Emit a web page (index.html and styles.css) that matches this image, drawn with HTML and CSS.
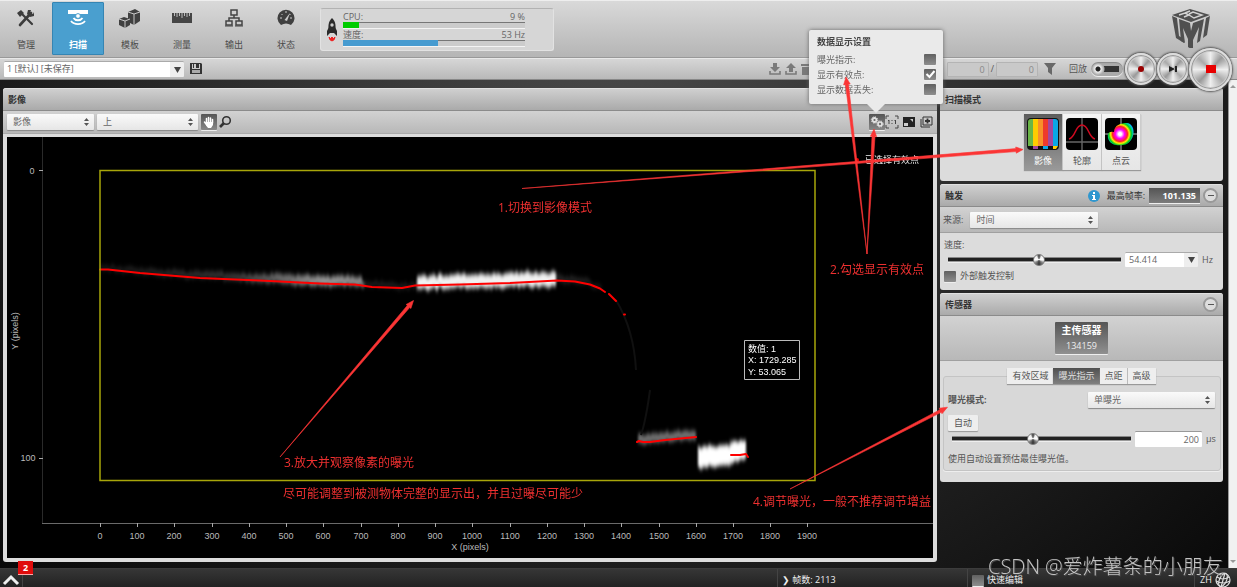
FILE: index.html
```html
<!DOCTYPE html>
<html lang="zh-CN">
<head>
<meta charset="utf-8">
<title>扫描</title>
<link rel="stylesheet" href="styles.css">
</head>
<body>
<header class="topbar">
  <nav class="tabs">
    <button class="tab"><svg width="20" height="20" viewBox="0 0 20 20"><path d="M4 17L15 5" stroke="#3c3c3c" stroke-width="2.600" stroke-linecap="round"/><path d="M5 5l11 11" stroke="#3c3c3c" stroke-width="2.200" fill="none" stroke-linecap="round"/><path d="M1 5l4-3 3 3-4 4zM12 2l3 0-1 3 3 1 1-2v4l-4 1-3-3z" fill="#3c3c3c"/></svg>管理</button>
    <button class="tab tab-on"><svg width="22" height="20" viewBox="0 0 22 20"><path d="M1 2h20v4H1z" fill="#fff"/><circle cx="11" cy="8" r="2.400" fill="#fff" stroke="#4a9ecb"/><path d="M6.500 10a5 4 0 0 0 9 0M4 13a8 6 0 0 0 14 0" fill="none" stroke="#fff" stroke-width="1.800"/></svg>扫描</button>
    <button class="tab"><svg width="22" height="20" viewBox="0 0 22 20"><path d="M9 4l7-3 5 3v9l-6 4-6-3z" fill="#404040"/><path d="M9 4l6 2v11M15 6l6-2" fill="none" stroke="#c8c8c8" stroke-width="1"/><path d="M0 11l5-2 6 2v6l-5 3-6-3z" fill="#404040"/><path d="M0 11l6 2v7M6 13l5-2" fill="none" stroke="#c8c8c8" stroke-width="1"/></svg>模板</button>
    <button class="tab"><svg width="22" height="20" viewBox="0 0 22 20"><path d="M1 5h20v10H1z" fill="#454545"/><path d="M3.500 5v3M6 5v4M8.500 5v3M11 5v5M13.500 5v3M16 5v4M18.500 5v3" stroke="#bbb" stroke-width="1"/></svg>测量</button>
    <button class="tab"><svg width="20" height="20" viewBox="0 0 20 20"><path d="M7 2h6v5H7zM2 13h6v4H2zM12 13h6v4h-6zM10 7v3M5 13v-3h10v3" fill="none" stroke="#454545" stroke-width="1.500"/><path d="M1 18h8M11 18h8" stroke="#454545" stroke-width="1"/></svg>输出</button>
    <button class="tab"><svg width="20" height="20" viewBox="0 0 20 20"><path d="M5 17a8.500 8.500 0 1 1 10 0q-5-3-10 0z" fill="#404040"/><path d="M4 10h2M5.500 6l1 1M10 3v2M14.500 6l-1 1M16 10h-2" stroke="#ccc"/><path d="M8.500 12L14 5l-3 8z" fill="#ccc"/></svg>状态</button>
  </nav>
  <section class="stats">
    <svg width="12" height="26" viewBox="0 0 12 26"><path d="M6 1c4 4 4 8 3 13H3C2 9 2 5 6 1z" fill="#2b2b2b"/><path d="M3 10l-2 4v5l3-3h4l3 3v-5l-2-4z" fill="#2b2b2b"/><circle cx="6" cy="8" r="1.700" fill="#ccc"/><path d="M3 20l1.500 1.500L6 20l1.500 1.500L9 20q0 3-3 4-3-1-3-4z" fill="#e22" stroke="#e22"/></svg>
    <div class="meters">
      <div class="meter-label"><span>CPU:</span><span>9 %</span></div>
      <div class="meter"><div class="meter-fill green" style="width:9%"></div></div>
      <div class="meter-label second"><span>速度:</span><span>53 Hz</span></div>
      <div class="meter"><div class="meter-fill blue" style="width:52%"></div></div>
    </div>
  </section>
  <svg class="logo" width="40" height="40" viewBox="0 0 40 40"><g fill="#505050"><path d="M1 7l18-6 20 6-19 7z"/><path d="M1 8l5 2 2 18 5 3v4L5 30z"/><path d="M39 8l-4 2-3 20 4-3z"/><path d="M8 11l11 4 1 8 2-8 11-4-4 22-3 2 2-16-6 13v8l-2 1-3-2v-8l-5-11 2 15-4-2z"/></g><path d="M8 7l6-2 4 2-5 2M18 7l5 3 8-3-9-3-4 2M14 5l5-2" fill="none" stroke="#d4d4d4" stroke-width="1.400"/></svg>
</header>

<div class="jobbar">
  <select class="job" aria-label="作业"><option>1 [默认] [未保存]</option></select>
  <button class="plain" aria-label="保存"><svg width="12" height="12" viewBox="0 0 12 12"><path d="M0 0h11l1 1v10H0z" fill="#333"/><path d="M2 1h8v5H2z" fill="#c9c9c9"/><path d="M3 1h1v4H3zM6 1h3v4H6z" fill="#333"/><path d="M2 7h8v3H2z" fill="#aaa"/></svg></button>
  <div class="spacer"></div>
  <div class="play">
    <button class="plain" aria-label="下载"><svg width="12" height="12" viewBox="0 0 12 12"><path d="M4 0h4v4h3L6 9 1 4h3z" fill="#7a7a7a"/><path d="M1 8v3h10V8" fill="none" stroke="#7a7a7a" stroke-width="1.600"/></svg></button>
    <button class="plain" aria-label="上传"><svg width="12" height="12" viewBox="0 0 12 12"><path d="M6 0l5 5H8v4H4V5H1z" fill="#7a7a7a"/><path d="M1 8v3h10V8" fill="none" stroke="#7a7a7a" stroke-width="1.600"/></svg></button>
    <button class="plain" aria-label="删除"><svg width="10" height="12" viewBox="0 0 10 12"><path d="M0 1h10v2H0zM1 4h8v8H1z" fill="#7a7a7a"/></svg></button>
    <div class="spacer"></div>
    <input class="frame" value="0" aria-label="当前帧"><span class="slash">/</span><input class="frame" value="0" aria-label="总帧数">
  </div>
  <button class="plain" aria-label="筛选"><svg width="12" height="12" viewBox="0 0 12 12"><path d="M0 0h12L8 5v7L4 9V5z" fill="#686868"/></svg></button>
  <label class="replay" for="replay">回放</label>
  <input type="checkbox" class="toggle" id="replay">
  <div class="transport">
    <button class="knob" aria-label="录制"><svg width="8" height="8" viewBox="0 0 8 8"><circle cx="4" cy="4" r="3" fill="#900"/></svg></button>
    <button class="knob" aria-label="单步"><svg width="10" height="8" viewBox="0 0 10 8"><path d="M1 1l6 3-6 3zM7 1h2v6H7z" fill="#222"/></svg></button>
    <button class="knob big" aria-label="停止"><svg width="10" height="8" viewBox="0 0 10 8"><path d="M0 0h10v8H0z" fill="#e80000"/></svg></button>
  </div>
</div>

<main class="work">
  <section class="viewer card">
    <h2 class="head">影像</h2>
    <div class="tools">
      <select class="w-view" aria-label="数据视图"><option>影像</option></select>
      <select class="w-top" aria-label="传感器位置"><option>上</option></select>
      <button class="tool tool-on" aria-label="平移"><svg width="12" height="12" viewBox="0 0 12 12"><path d="M3.500 7V2.500M5.500 6V1.500M7.500 6V2M9.500 7V3.500M1.500 6l3 4" stroke="#fff" stroke-width="1.500" stroke-linecap="round"/><path d="M3 6h7v3l-2 3H5L3 9z" fill="#fff"/></svg></button>
      <button class="tool lens" aria-label="缩放"><svg width="14" height="14" viewBox="0 0 14 14"><circle cx="8.500" cy="5.500" r="3.800" fill="none" stroke="#333" stroke-width="1.600"/><path d="M6 8L2 12" stroke="#333" stroke-width="2.600"/></svg></button>
      <div class="spacer"></div>
      <div class="gear">
        <button class="tool tool-on" aria-label="数据显示设置"><svg width="14" height="12" viewBox="0 0 14 12"><g fill="none" stroke="#e4e4e4"><circle cx="4.500" cy="4" r="2" stroke-width="1.800"/><circle cx="4.500" cy="4" r="3.200" stroke-dasharray="1.300 1.200"/><circle cx="10" cy="8" r="2" stroke-width="1.600"/><circle cx="10" cy="8" r="3.100" stroke-dasharray="1.300 1.200"/></g></svg></button>
        <div class="popup">
          <h3>数据显示设置</h3>
          <label>曝光指示:<input type="checkbox"></label>
          <label>显示有效点:<input type="checkbox" checked></label>
          <label>显示数据丢失:<input type="checkbox"></label>
        </div>
      </div>
      <button class="tool" aria-label="实际大小"><svg width="14" height="14" viewBox="0 0 14 14"><path d="M1 4V1h3M10 1h3v3M13 10v3h-3M4 13H1v-3" fill="none" stroke="#444"/><path d="M3 6l1-1v4M9.500 6l1-1v4M7 5v1M7 8v1" fill="none" stroke="#444"/></svg></button>
      <button class="tool" aria-label="适合窗口"><svg width="12" height="10" viewBox="0 0 12 10"><path d="M0 0h12v10H0z" fill="#222"/><path d="M1 6h4v3H1zM7 2h3v3" fill="#ccc"/></svg></button>
      <button class="tool" aria-label="新窗口"><svg width="13" height="12" viewBox="0 0 13 12"><path d="M3 1h9v8H3zM1 3v8h9" fill="none" stroke="#333"/><path d="M7.500 2.500v5M5 5h5" stroke="#333" stroke-width="1.800"/></svg></button>
    </div>
    <div class="plot-wrap">
      <svg class="plot" viewBox="7 137 926 421" preserveAspectRatio="xMinYMin meet">
        <defs>
          <filter id="streak" x="-5%" y="-80%" width="110%" height="260%" color-interpolation-filters="sRGB">
            <feTurbulence type="fractalNoise" baseFrequency="0.35 0.002" numOctaves="2" seed="4" result="n"/>
            <feDisplacementMap in="SourceGraphic" in2="n" xChannelSelector="A" yChannelSelector="R" scale="7" result="d"/>
            <feGaussianBlur in="d" stdDeviation="0.900 2.400"/>
          </filter>
          <linearGradient id="ga"><stop offset="0" stop-color="#fff" stop-opacity=".12"/><stop offset=".5" stop-color="#fff" stop-opacity=".22"/><stop offset=".85" stop-color="#fff" stop-opacity=".6"/><stop offset="1" stop-color="#fff" stop-opacity=".55"/></linearGradient>
        </defs>
        <path d="M42.500 137V523" fill="none" stroke="#2a2a2a"/>
        <path d="M42 523.500H933" fill="none" stroke="#6a6a6a"/>
        <path d="M39 170.500h4M39 458.500h4M100.500 523v4M137.500 523v4M174.500 523v4M212.500 523v4M249.500 523v4M286.500 523v4M323.500 523v4M361.500 523v4M398.500 523v4M435.500 523v4M472.500 523v4M510.500 523v4M547.500 523v4M584.500 523v4M621.500 523v4M659.500 523v4M696.500 523v4M733.500 523v4M770.500 523v4M807.500 523v4" stroke="#aaa"/>
        <g class="axis" text-anchor="middle">
          <text x="32" y="174">0</text><text x="28" y="461">100</text>
          <text x="100" y="539">0</text><text x="137" y="539">100</text><text x="174" y="539">200</text><text x="212" y="539">300</text><text x="249" y="539">400</text><text x="286" y="539">500</text><text x="323" y="539">600</text><text x="361" y="539">700</text><text x="398" y="539">800</text><text x="435" y="539">900</text><text x="472" y="539">1000</text><text x="510" y="539">1100</text><text x="547" y="539">1200</text><text x="584" y="539">1300</text><text x="621" y="539">1400</text><text x="659" y="539">1500</text><text x="696" y="539">1600</text><text x="733" y="539">1700</text><text x="770" y="539">1800</text><text x="807" y="539">1900</text>
          <text x="470" y="550">X (pixels)</text>
          <text x="18" y="331" transform="rotate(-90 18 331)">Y (pixels)</text>
        </g>
        <g filter="url(#streak)">
          <path d="M100 266L240 274 300 275 362 277 364 286 300 285 240 281 100 270z" fill="url(#ga)"/>
          <path d="M362 281L410 285l5-2v5l-10 1-43-4z" fill="#fff" opacity=".15"/>
          <path d="M417 276L557 272v14l-140 3z" fill="#fff" opacity=".95"/>
          <path d="M557 275l30 4 16 7v2l-16-4-30-2z" fill="#fff" opacity=".15"/>
          <path d="M638 435l58-5v9l-58 5z" fill="#fff" opacity=".45"/>
        </g>
        <g filter="url(#streak)"><path d="M698 447l33-2v20l-33 3z" fill="#fff"/><path d="M731 441h15v18l-15 4z" fill="#fff"/></g>
        <path d="M616 300Q634 330 636 370M650 390Q646 420 641 435" fill="none" stroke="#101010" stroke-width="2"/>
        <path d="M100 269.500L108 269.500 140 273 200 278 260 280.500 320 283.500 355 284.500 372 287 402 288 415 285.500 460 284.500 510 283 557 280.500 575 281.500 590 284.500 600 288.500 605 292M609 294L616 301M624 314.500h1M637 442l2-1 4 1 7 0 15-2 31-3M731 455l9 0 6-1 2 3" fill="none" stroke="#f00" stroke-width="2" stroke-linecap="round" stroke-linejoin="round"/>
        <path d="M100 170.500H815V480.500H100z" fill="none" stroke="#a8a60a" stroke-width="1.500"/>
        <circle cx="857" cy="160" r="2" fill="#e00"/>
        <text class="sel" x="865" y="163">已选择有效点</text>
        <path d="M744.500 340.500h55v39h-55z" fill="#000" stroke="#bbb"/>
        <g class="tip"><text x="748" y="352">数值: 1</text><text x="748" y="363">X: 1729.285</text><text x="748" y="375">Y: 53.065</text></g>
      </svg>
    </div>
  </section>

  <aside class="side">
    <section class="card">
      <h2 class="head">扫描模式</h2>
      <div class="modes">
        <button class="mode mode-on"><svg width="32" height="32" viewBox="0 0 32 32"><rect width="32" height="32" rx="4" fill="#111"/><path d="M1 4q0-3 3-3h2v27H1z" fill="#6ab547"/><path d="M6 1h5v27H6z" fill="#fc0"/><path d="M11 1h5v27h-5z" fill="#f7902a"/><path d="M16 1h5v27h-5z" fill="#ee3a2b"/><path d="M21 1h5v27h-5z" fill="#a2479c"/><path d="M26 1h2q3 0 3 3v24h-5z" fill="#0aa7e6"/><path d="M6 28h5v3H6z" fill="#a2479c"/><path d="M16 28h5v3h-5z" fill="#0aa7e6"/><path d="M26 28h5l-2 3h-3z" fill="#fc0"/></svg>影像</button>
        <button class="mode"><svg width="32" height="32" viewBox="0 0 32 32"><rect width="32" height="32" rx="4"/><path d="M16 0v32M0 24h32" stroke="#666" stroke-width="1.400"/><path d="M3 21C10 19 9 7 16 7S22 19 29 21" fill="none" stroke="#d00a20" stroke-width="1.400"/></svg>轮廓</button>
        <button class="mode"><svg width="32" height="32" viewBox="0 0 32 32"><defs><radialGradient id="rb" gradientUnits="userSpaceOnUse" cx="15" cy="16" r="15"><stop offset=".1" stop-color="#fff"/><stop offset=".3" stop-color="#f0f"/><stop offset=".5" stop-color="#f22"/><stop offset=".62" stop-color="#fe0"/><stop offset=".75" stop-color="#0c2"/><stop offset=".9" stop-color="#0cd"/><stop offset="1" stop-color="#22f"/></radialGradient></defs><rect width="32" height="32" rx="4"/><path d="M16 0v32M0 16h32" stroke="#bbb"/><path d="M3 16q1-3 6-2c0-7 7-9 13-9 8 1 8 12 4 17-3 5-10 6-15 5-6-1-9-6-8-11z" fill="url(#rb)"/></svg>点云</button>
      </div>
    </section>

    <section class="card">
      <h2 class="head">触发<span class="spacer"></span>
        <svg class="info" width="12" height="12" viewBox="0 0 12 12"><circle cx="6" cy="6" r="6" fill="#2f97cf"/><path d="M5 2h2v2H5zM4 5h3v4h1v1H4V9h1V6H4z" fill="#fff"/></svg>
        <span class="rate-label">最高帧率:</span><output class="rate">101.135</output>
        <button class="fold" aria-label="折叠"></button></h2>
      <div class="source"><label for="src">来源:</label><select id="src" class="w-src"><option>时间</option></select></div>
      <div class="trigger">
        <label for="speed">速度:</label>
        <div class="row"><input id="speed" type="range" min="0" max="100" value="53" class="range"><select class="hz" aria-label="速度值"><option>54.414</option></select><span class="unit">Hz</span></div>
        <label class="check"><input type="checkbox">外部触发控制</label>
      </div>
    </section>

    <section class="card">
      <h2 class="head">传感器<span class="spacer"></span><button class="fold" aria-label="折叠"></button></h2>
      <div class="sensor"><button class="main-sensor"><b>主传感器</b>134159</button></div>
      <div class="exposure">
        <div class="group">
          <div class="subtabs"><button>有效区域</button><button class="sub-on">曝光指示</button><button>点距</button><button class="ruled">高级</button></div>
          <div class="row between"><label for="mode"><b>曝光模式:</b></label><select id="mode" class="w-mode"><option>单曝光</option></select></div>
          <button class="auto">自动</button>
          <div class="row"><input type="range" min="0" max="100" value="45" class="range" aria-label="曝光"><input class="us" value="200" aria-label="曝光值"><span class="unit">μs</span></div>
          <p class="hint">使用自动设置预估最佳曝光值。</p>
        </div>
      </div>
    </section>
  </aside>
  <div class="scroll"><i class="up"></i><i class="down"></i></div>
</main>

<footer class="status">
  <button class="expand" aria-label="展开日志"><svg width="18" height="12" viewBox="0 0 18 12"><path d="M2 10l7-7 7 7" fill="none" stroke="#eee" stroke-width="3"/></svg><span class="badge">2</span></button>
  <div class="spacer"></div>
  <div class="cell frames">❯ 帧数: 2113</div>
  <label class="cell edit"><input type="checkbox">快速编辑</label>
  <div class="cell lang">ZH <svg width="16" height="16" viewBox="0 0 16 16"><g fill="none" stroke="#ddd" stroke-width="1.200"><circle cx="8" cy="8" r="7"/><ellipse cx="8" cy="8" rx="3.500" ry="7" transform="rotate(25 8 8)"/><path d="M2 5q6 4 12 0M1 9q7 4 14 0M10 1L6 15"/></g></svg></div>
</footer>

<svg class="notes" viewBox="0 0 1237 587" preserveAspectRatio="xMinYMin meet">
  <g fill="#fb3535" stroke="#fb3535" stroke-width="0.600">
    <path d="M522 188.500L1016.100 151.600 1016.300 153.200 1023 149.500 1015.700 147 1015.900 148.600z"/>
    <path d="M867 254L848.500 84.300 850.200 84 846 77 843.600 84.900 845.500 84.700z"/>
    <path d="M867 254L875 136.600 876.600 136.700 874 129 870.400 136.300 872 136.400z"/>
    <path d="M280 457L409.700 307.500 410.900 308.500 413.500 300.500 406.100 304.500 407.300 305.500z"/>
    <path d="M790 489L941.200 412.300 942 413.700 947.500 407.200 939.200 408.200 940 409.700z"/>
  </g>
  <g class="note">
    <text x="498" y="212">1.切换到影像模式</text>
    <text x="830" y="274">2.勾选显示有效点</text>
    <text x="284" y="467">3.放大并观察像素的曝光</text>
    <text x="283" y="498">尽可能调整到被测物体完整的显示出，并且过曝尽可能少</text>
    <text x="753" y="506">4.调节曝光，一般不推荐调节增益</text>
  </g>
  <text class="mark" x="988" y="574">CSDN @爱炸薯条的小朋友</text>
</svg>
</body>
</html>
```
FILE: styles.css
```css
* { box-sizing: border-box; }
body, button, input, select {
  font: 9px/12px "Open Sans", "Noto Sans", "Noto Sans CJK SC", sans-serif;
  color: #555;
}
body {
  margin: 0;
  position: relative;
  min-height: 100vh;
  display: flex;
  flex-direction: column;
  background: radial-gradient(ellipse at 50% 0, #4c4c4c, #2a2a2a 50%, #080808);
  overflow: hidden;
}
button, select, input { margin: 0; padding: 0; border: 0; border-radius: 1px; }
button { background: none; }
svg { display: block; flex: none; }
h2, h3, p { margin: 0; font-size: 9px; }
.spacer { flex: 1; }

.topbar {
  display: flex;
  height: 58px;
  background: linear-gradient(#d9d9d9, #b5b5b5);
  border-top: 1px solid #eee;
  border-bottom: 1px solid #999;
}
.tabs { display: flex; padding: 1px 0 2px; }
.tab {
  width: 52px;
  display: flex;
  flex-direction: column;
  align-items: center;
  gap: 11px;
  padding-top: 6px;
  color: #4a4a4a;
}
.tab-on {
  background: #4a9fcf;
  border: 1px solid #3585b3;
  padding-top: 5px;
  color: #fff;
  font-weight: bold;
}
.stats {
  display: flex;
  align-items: center;
  gap: 5px;
  width: 234px;
  margin: 7px 0 6px 8px;
  padding: 0 28px 0 5px;
  border: 1px solid #e2e2e2;
  border-top-color: #b2b2b2;
  border-radius: 3px;
  background: #d6d6d6;
}
.meters { flex: 1; line-height: 10px; color: #666; }
.meter-label { display: flex; justify-content: space-between; }
.second { margin-top: 1px; }
.meter { height: 7px; background: #ccc; border-top: 1px solid #777; border-bottom: 1px solid #f4f4f4; }
.meter-fill { height: 6px; margin-top: -1px; }
.green { background: #0c0; }
.blue { background: #469bd0; }
.logo { margin: 7px 26px 0 auto; }

.jobbar {
  display: flex;
  align-items: center;
  height: 22px;
  padding: 0 5px 0 4px;
  background: linear-gradient(#d6d6d6, #b9b9b9);
  border-bottom: 1px solid #888;
  border-top: 1px solid #e8e8e8;
}
select {
  appearance: none;
  height: 16px;
  padding: 0 14px 0 6px;
  color: #666;
  background: url("data:image/svg+xml,%3Csvg xmlns='http://www.w3.org/2000/svg' width='5' height='8'%3E%3Cpath d='M0 3l2.500-3L5 3zM0 5l2.500 3L5 5z' fill='%23555'/%3E%3C/svg%3E") no-repeat right 5px center, linear-gradient(#fafafa, #e6e6e6);
  box-shadow: 0 1px 1px #888;
}
.job, .hz {
  background: url("data:image/svg+xml,%3Csvg xmlns='http://www.w3.org/2000/svg' width='7' height='6'%3E%3Cpath d='M0 0h7l-3.500 6z' fill='%23444'/%3E%3C/svg%3E") no-repeat right 3px bottom 4px, linear-gradient(90deg, #fff calc(100% - 14px), #eee 0);
  box-shadow: inset 0 1px 0 #aaa;
}
.job { width: 180px; padding-left: 3px; margin-right: 6px; }
.play { display: flex; align-items: center; gap: 4px; width: 269px; margin-right: 6px; }
.frame {
  width: 42px;
  height: 15px;
  padding-right: 3px;
  text-align: right;
  color: #888;
  background: #c9c9c9;
  border: 1px solid #b4b4b4;
}
.slash { margin: 0 -2px; }
.replay { margin: 0 4px 0 13px; }
.toggle {
  appearance: none;
  width: 32px;
  height: 14px;
  border-radius: 7px;
  background: radial-gradient(circle at 7px 7px, #222 2px, #eee 3px, #aaa 6px, transparent 7px), linear-gradient(transparent 4px, #333 0 10px, transparent 0) 10px 0 / 18px 14px no-repeat, #aaa;
  box-shadow: inset 0 1px 1px #888, 0 1px 0 #eee;
}
.transport { display: flex; align-items: center; margin-left: 2px; z-index: 3; }
.knob {
  display: grid;
  place-items: center;
  width: 32px;
  height: 32px;
  border-radius: 50%;
  background: conic-gradient(#eee, #999 12%, #eee 25%, #aaa 37%, #eee 50%, #999 62%, #eee 75%, #aaa 87%, #eee);
  border: 2px solid #ddd;
  box-shadow: inset 0 0 0 1px #999, inset 0 0 0 2px #ccc, 0 0 2px 1px #555;
}
.big { width: 43px; height: 43px; }

.work { flex: 1; display: flex; min-height: 0; }
.card { background: #dcdcdc; border-radius: 3px; overflow: hidden; }
.head {
  display: flex;
  align-items: center;
  height: 23px;
  padding: 0 5px;
  color: #333;
  background: linear-gradient(#cfcfcf, #aaa);
  border-bottom: 1px solid #8b8b8b;
  border-top: 1px solid #e0e0e0;
}
.viewer {
  flex: 1;
  min-width: 0;
  display: flex;
  flex-direction: column;
  margin: 8px 3px 6px 3px;
  overflow: visible;
}
.viewer .head { border-radius: 3px 3px 0 0; }
.tools {
  display: flex;
  align-items: center;
  gap: 3px;
  height: 23px;
  padding: 0 5px 0 4px;
  background: linear-gradient(#d2d2d2, #b8b8b8);
  border-bottom: 1px solid #aaa;
}
.w-view { width: 87px; }
.w-top { width: 101px; }
.tool { width: 16px; height: 16px; display: grid; place-items: center; margin-right: -2px; }
.tool-on { background: linear-gradient(#555, #888); box-shadow: 0 1px 0 #eee; margin-right: 0; }
.lens { margin-left: -3px; }
.gear { position: relative; margin-right: -4px; }
.popup {
  position: absolute;
  z-index: 5;
  right: -58px;
  bottom: 26px;
  width: 134px;
  height: 74px;
  padding: 6px 7px 0 8px;
  background: #eaeaea;
  border-radius: 2px;
  box-shadow: 0 0 4px #666;
  color: #666;
}
.popup::after {
  content: "";
  position: absolute;
  right: 58px;
  top: 100%;
  border: 9px solid transparent;
  border-top-color: #eaeaea;
  border-bottom: 0;
}
.popup h3 { margin-bottom: 4px; color: #444; }
.popup label { display: flex; justify-content: space-between; align-items: center; height: 15px; }
input[type="checkbox"]:not(.toggle) {
  appearance: none;
  flex: none;
  width: 12px;
  height: 11px;
  background: linear-gradient(#606060, #8e8e8e);
  box-shadow: 0 1px 0 #eee;
}
input[type="checkbox"]:not(.toggle):checked {
  background: url("data:image/svg+xml,%3Csvg xmlns='http://www.w3.org/2000/svg' width='12' height='11'%3E%3Cpath d='M2.500 5l3 3 5-6' fill='none' stroke='white' stroke-width='2'/%3E%3C/svg%3E"), linear-gradient(#606060, #8e8e8e);
}
.plot-wrap { flex: 1; min-height: 0; margin: 3px 4px 4px; background: #000; }
.plot { width: 100%; height: 100%; }
.axis { font: 9px "Liberation Sans", sans-serif; fill: #bbb; }
.sel { font-size: 9px; fill: #eee; }
.tip { font: 9px "Liberation Sans", "Noto Sans CJK SC", sans-serif; fill: #fff; }

.side { flex: none; width: 283px; display: flex; flex-direction: column; gap: 3px; margin: 8px 5px 0 0; }
.modes { display: flex; justify-content: center; padding: 3px 0 11px 2px; }
.mode {
  width: 39px;
  height: 56px;
  display: flex;
  flex-direction: column;
  align-items: center;
  gap: 5px;
  padding-top: 4px;
  background: linear-gradient(#f4f4f4, #e6e6e6);
  border-right: 1px solid #ccc;
  box-shadow: 0 1px 1px #999;
  border-radius: 0;
}
.mode-on { background: linear-gradient(#5c5c5c, #999); color: #fff; }
.info { margin-right: 7px; }
.rate-label { font-weight: normal; margin-right: 4px; }
.rate {
  width: 51px;
  padding: 2px 4px 1px 0;
  text-align: right;
  color: #fff;
  background: linear-gradient(#555, #7c7c7c);
  border-bottom: 1px solid #eee;
}
.fold {
  width: 15px;
  height: 15px;
  margin-left: 3px;
  border-radius: 50%;
  border: 2px solid #999;
  background: linear-gradient(#555, #555) center / 6px 1px no-repeat, #ddd;
}
.source {
  display: flex;
  align-items: center;
  gap: 7px;
  height: 26px;
  padding: 0 3px;
  background: linear-gradient(#d2d2d2, #b8b8b8);
  border-bottom: 1px solid #a0a0a0;
}
.w-src { width: 128px; }
.trigger { padding: 6px 4px 7px; }
.row { display: flex; align-items: center; }
.between { justify-content: space-between; }
.trigger .row { margin: 1px 0 2px; }
.range {
  appearance: none;
  flex: 1;
  min-width: 0;
  height: 12px;
  margin: 0 4px;
  background: linear-gradient(transparent 3px, #888 0 4px, #222 0 7px, #999 0 8px, #eee 0 9px, transparent 0);
}
.range::-webkit-slider-thumb {
  appearance: none;
  width: 12px;
  height: 12px;
  border-radius: 50%;
  border: 1px solid #777;
  background: conic-gradient(#333, #eee 10%, #fff 25%, #888 35%, #333 50%, #888 65%, #fff 75%, #eee 90%, #333);
}
.hz { width: 73px; height: 15px; padding-left: 4px; }
.unit { width: 21px; padding-left: 4px; }
.check { display: flex; align-items: center; gap: 4px; height: 14px; }
.sensor {
  display: grid;
  place-items: center;
  height: 45px;
  background: linear-gradient(#d2d2d2, #b8b8b8);
  border-bottom: 1px solid #a0a0a0;
}
.main-sensor {
  width: 53px;
  height: 32px;
  color: #eee;
  background: linear-gradient(#555, #909090);
  box-shadow: 0 1px 0 #eee;
  line-height: 15px;
}
.main-sensor b { display: block; font-size: 10px; color: #fff; }
.exposure { padding: 15px 2px 11px 3px; }
.group {
  height: 95px;
  padding: 0 5px 0 4px;
  border: 1px solid #c4c4c4;
  border-radius: 3px;
  background: #d8d8d8;
  box-shadow: 0 1px 0 #eee;
}
.subtabs { display: flex; justify-content: center; margin: -9px 0 8px; }
.subtabs button { height: 16px; padding: 0 5px; background: #eee; box-shadow: 0 1px 1px #999; border-radius: 0; white-space: nowrap; }
.subtabs .ruled { box-shadow: -1px 0 0 #bbb, 0 1px 1px #999; }
.subtabs .sub-on { color: #ddd; background: linear-gradient(#505050, #808080); }
.w-mode { width: 127px; }
.auto { display: block; width: 30px; height: 16px; margin: 7px 0 0; background: #eee; box-shadow: 0 1px 1px #999; }
.us { width: 67px; height: 16px; padding-right: 3px; text-align: right; background: #fff; box-shadow: inset 0 1px 0 #999; color: #666; }
.group .unit { width: 13px; white-space: nowrap; }
.hint { margin-top: 6px; }
.scroll {
  flex: none;
  width: 9px;
  display: flex;
  flex-direction: column;
  justify-content: space-between;
  align-items: center;
  padding: 5px 0;
  background: #f1f1f1;
  border-left: 1px solid #999;
}
.up, .down { border: 3px solid transparent; }
.up { border-bottom-color: #999; border-top: 0; }
.down { border-top-color: #999; border-bottom: 0; }

.status {
  display: flex;
  height: 19px;
  background: linear-gradient(#363636, #222);
  border-top: 1px solid #3c3c3c;
  color: #eee;
}
.expand { position: relative; width: 23px; padding: 4px 0 0 2px; border-right: 1px solid #444; }
.badge {
  position: absolute;
  left: 18px;
  top: -8px;
  width: 15px;
  height: 14px;
  line-height: 13px;
  font-weight: bold;
  color: #fff;
  background: #e00c0c;
  border-bottom: 1px solid #faa;
}
.cell { display: flex; align-items: center; gap: 3px; padding: 4px 4px 0; border-left: 1px solid #444; }
.frames { width: 190px; }
.edit { width: 227px; }
.lang { width: 43px; padding-left: 5px; }

.notes { position: absolute; inset: 0; width: 100%; height: 100%; z-index: 9; pointer-events: none; }
.note { font: 12px "Open Sans", "Noto Sans CJK SC", sans-serif; fill: #ee3030; }
.mark { font: 300 20px "Open Sans", "Noto Sans CJK SC", sans-serif; fill: #c4c4c4; filter: drop-shadow(1px 1px 0 #444); }
```
